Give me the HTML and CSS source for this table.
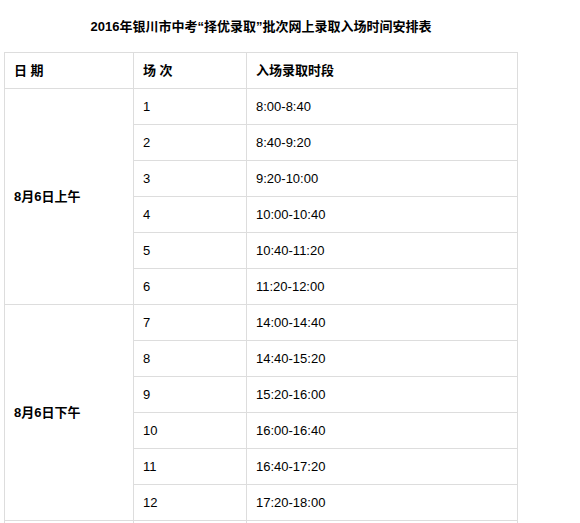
FILE: index.html
```html
<!DOCTYPE html>
<html lang="zh-CN">
<head>
<meta charset="utf-8">
<title>2016年银川市中考“择优录取”批次网上录取入场时间安排表</title>
<link rel="stylesheet" href="styles.css">
</head>
<body>
<div class="page">
  <h1 class="title">2016年银川市中考“择优录取”批次网上录取入场时间安排表</h1>
  <table class="schedule">
    <colgroup>
      <col class="c-date">
      <col class="c-round">
      <col class="c-time">
    </colgroup>
    <tr class="head">
      <td>日 期</td>
      <td>场 次</td>
      <td>入场录取时段</td>
    </tr>
    <tr><td class="date" rowspan="6">8月6日上午</td><td>1</td><td>8:00-8:40</td></tr>
    <tr><td>2</td><td>8:40-9:20</td></tr>
    <tr><td>3</td><td>9:20-10:00</td></tr>
    <tr><td>4</td><td>10:00-10:40</td></tr>
    <tr><td>5</td><td>10:40-11:20</td></tr>
    <tr><td>6</td><td>11:20-12:00</td></tr>
    <tr><td class="date" rowspan="6">8月6日下午</td><td>7</td><td>14:00-14:40</td></tr>
    <tr><td>8</td><td>14:40-15:20</td></tr>
    <tr><td>9</td><td>15:20-16:00</td></tr>
    <tr><td>10</td><td>16:00-16:40</td></tr>
    <tr><td>11</td><td>16:40-17:20</td></tr>
    <tr><td>12</td><td>17:20-18:00</td></tr>
    <tr class="tail"><td></td><td></td><td></td></tr>
  </table>
</div>
</body>
</html>
```

FILE: styles.css
```css
html, body {
  margin: 0;
  padding: 0;
  background: #fff;
}

body {
  font-family: "Liberation Sans", Arial, "Noto Sans CJK SC", sans-serif;
  font-size: 13px;
  color: #000;
}

.page {
  width: 514px;
  padding: 16px 4px 0;
}

.title {
  margin: 0 0 14px;
  font-size: 13px;
  line-height: 22px;
  font-weight: bold;
  text-align: center;
}

.schedule {
  width: 514px;
  border-collapse: collapse;
  table-layout: fixed;
}

.c-date { width: 129px; }
.c-round { width: 113px; }

.schedule td {
  border: 1px solid #dddddd;
  height: 35px;
  padding: 0 9px;
  line-height: 16px;
  vertical-align: middle;
  box-sizing: border-box;
}

.schedule tr {
  height: 36px;
}

.head td,
.date {
  font-weight: bold;
}
```
